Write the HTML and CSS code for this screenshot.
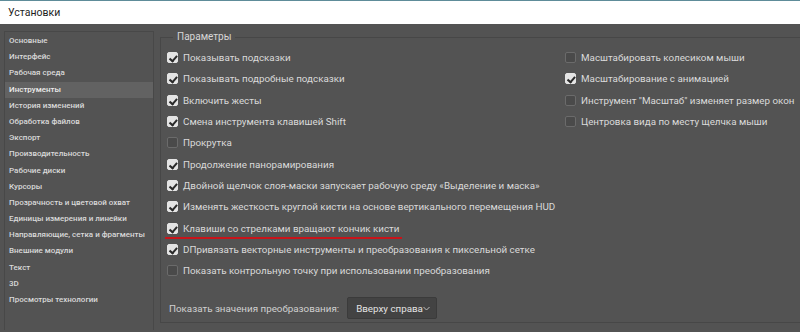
FILE: index.html
```html
<!DOCTYPE html>
<html lang="ru">
<head>
<meta charset="utf-8">
<title>Установки</title>
<link rel="stylesheet" href="styles.css">
</head>
<body>
<div class="window">
  <div class="titlebar">Установки</div>
  <div class="main">
    <ul class="sidebar">
      <li>Основные</li>
      <li>Интерфейс</li>
      <li>Рабочая среда</li>
      <li class="active">Инструменты</li>
      <li>История изменений</li>
      <li>Обработка файлов</li>
      <li>Экспорт</li>
      <li>Производительность</li>
      <li>Рабочие диски</li>
      <li>Курсоры</li>
      <li>Прозрачность и цветовой охват</li>
      <li>Единицы измерения и линейки</li>
      <li>Направляющие, сетка и фрагменты</li>
      <li>Внешние модули</li>
      <li>Текст</li>
      <li>3D</li>
      <li>Просмотры технологии</li>
    </ul>
    <fieldset class="panel">
      <legend class="legend">Параметры</legend>
      <div class="columns">
        <div class="col col-left">
          <label class="opt"><span class="cb on"></span>Показывать подсказки</label>
          <label class="opt"><span class="cb on"></span>Показывать подробные подсказки</label>
          <label class="opt"><span class="cb on"></span>Включить жесты</label>
          <label class="opt"><span class="cb on"></span>Смена инструмента клавишей Shift</label>
          <label class="opt"><span class="cb"></span>Прокрутка</label>
          <label class="opt"><span class="cb on"></span>Продолжение панорамирования</label>
          <label class="opt"><span class="cb on"></span>Двойной щелчок слоя-маски запускает рабочую среду «Выделение и маска»</label>
          <label class="opt"><span class="cb on"></span>Изменять жесткость круглой кисти на основе вертикального перемещения HUD</label>
          <label class="opt"><span class="cb on"></span><span class="marked">Клавиши со стрелками вращают кончик кисти</span></label>
          <label class="opt"><span class="cb on"></span>DПривязать векторные инструменты и преобразования к пиксельной сетке</label>
          <label class="opt"><span class="cb"></span>Показать контрольную точку при использовании преобразования</label>
        </div>
        <div class="col col-right">
          <label class="opt"><span class="cb"></span>Масштабировать колесиком мыши</label>
          <label class="opt"><span class="cb on"></span>Масштабирование с анимацией</label>
          <label class="opt"><span class="cb"></span>Инструмент "Масштаб" изменяет размер окон</label>
          <label class="opt"><span class="cb"></span>Центровка вида по месту щелчка мыши</label>
        </div>
      </div>
      <div class="transform">
        <span class="transform-label">Показать значения преобразования:</span>
        <span class="select">Вверху справа<svg class="chev" width="7" height="5" viewBox="0 0 7 5"><path d="M0.5 1 L3.5 4 L6.5 1" fill="none" stroke="#bdbdbd" stroke-width="1"/></svg></span>
      </div>
    </fieldset>
  </div>
</div>
</body>
</html>
```

FILE: styles.css
```css
* { box-sizing: border-box; }
html, body { margin: 0; padding: 0; }
body {
  width: 800px;
  height: 332px;
  overflow: hidden;
  background: #535353;
  font-family: Roboto, "Noto Sans", sans-serif;
}
.window { width: 800px; height: 332px; display: flex; flex-direction: column; }
.titlebar {
  height: 25px;
  background: #ffffff;
  border-top: 1px solid #5e8c99;
  color: #1e1e1e;
  font-size: 10.5px;
  line-height: 23px;
  padding-left: 8px;
}
.main {
  flex: 1;
  display: flex;
  padding: 7px 0 0 4px;
}
.sidebar {
  list-style: none;
  margin: 0;
  padding: 1px 0 0;
  width: 150px;
  height: 299px;
  border: 1px solid #484848;
  border-bottom: none;
  color: #d9d9d9;
  font-size: 8px;
  font-weight: 500;
}
.sidebar li {
  height: 16.2px;
  line-height: 16.2px;
  padding-left: 4px;
  white-space: nowrap;
}
.sidebar li.active { background: #626262; color: #ececec; }
.panel {
  flex: 1;
  margin: 0 0 10px 6px;
  padding: 0;
  border: 1px solid #474747;
  border-right: none;
  min-width: 0;
  height: 292px;
}
.legend {
  margin-left: 12px;
  padding: 0 4px;
  color: #d6d6d6;
  font-size: 10px;
  line-height: 12px;
}
.columns {
  display: flex;
  padding: 4px 0 0 6px;
}
.col { display: flex; flex-direction: column; }
.col-left { width: 398px; }
.opt {
  display: flex;
  align-items: center;
  height: 21.3px;
  color: #dadada;
  font-size: 9.8px;
  white-space: nowrap;
}
.cb {
  width: 11px;
  height: 11px;
  border-radius: 2px;
  background: #4a4a4a;
  border: 1px solid #6b6b6b;
  margin-right: 5px;
  flex: none;
  position: relative;
}
.cb.on { background: #e4e4e4; border-color: #e4e4e4; }
.cb.on::after {
  content: "";
  position: absolute;
  left: 2.5px;
  top: 1px;
  width: 3px;
  height: 5.5px;
  border: solid #2a2a2a;
  border-width: 0 2px 2px 0;
  transform: rotate(40deg);
}
.marked {
  position: relative;
}
.marked::after {
  content: "";
  position: absolute;
  left: -18px;
  right: -3px;
  bottom: -5px;
  height: 2px;
  background: #c8141a;
}
.transform {
  display: flex;
  align-items: center;
  margin-top: 16px;
  padding-left: 8px;
  color: #d0d0d0;
  font-size: 9.8px;
}
.transform-label { margin-right: 8px; white-space: nowrap; }
.select {
  display: inline-flex;
  align-items: center;
  justify-content: space-between;
  height: 22px;
  width: 90px;
  padding: 0 6px 0 8px;
  background: #434343;
  border: 1px solid #3b3b3b;
  border-radius: 2px;
  color: #e2e2e2;
  white-space: nowrap;
}
.chev { margin-top: 1px; }
```
